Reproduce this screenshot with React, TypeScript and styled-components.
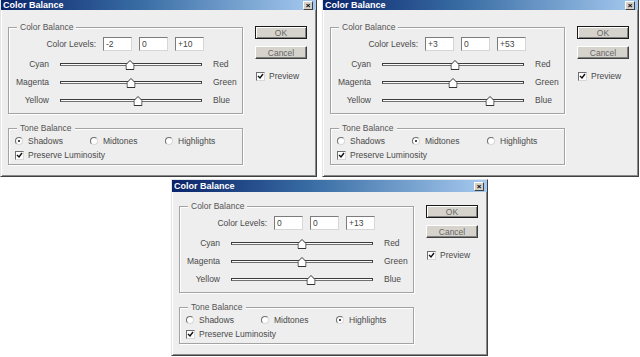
import styled, { createGlobalStyle } from "styled-components";

const GlobalStyle = createGlobalStyle`
  html, body {
    margin: 0;
    padding: 0;
    background: #ffffff;
  }
  body {
    font-family: "Liberation Sans", Arial, sans-serif;
    font-size: 8.5px;
    color: #4a4a4a;
  }
`;

type Tone = "Shadows" | "Midtones" | "Highlights";

type DialogData = {
  levels: [number, number, number];
  tone: Tone;
  cut: boolean;
};

const sliders = [
  { left: "Cyan", right: "Red" },
  { left: "Magenta", right: "Green" },
  { left: "Yellow", right: "Blue" },
];

const tones: Tone[] = ["Shadows", "Midtones", "Highlights"];

const fmt = (v: number) => (v > 0 ? `+${v}` : `${v}`);

const Page = styled.div`
  width: 640px;
  height: 357px;
  overflow: hidden;
  display: flex;
  flex-direction: column;
  gap: 2px;
`;

const TopRow = styled.div`
  display: flex;
  gap: 5px;
`;

const BottomRow = styled.div`
  display: flex;
  padding-left: 171px;
`;

const Window = styled.div<{ $cut: boolean }>`
  flex: none;
  width: 317px;
  height: 177px;
  box-sizing: border-box;
  background: #eeeeee;
  border: 1px solid #404040;
  border-top-color: #e4e4e4;
  border-left-color: #e4e4e4;
  ${({ $cut }) => ($cut ? "border-top: none;" : "")}
  box-shadow: inset 1px 1px 0 #ffffff, inset -1px -1px 0 #8a8a8a;
  display: flex;
  flex-direction: column;
`;

const TitleBar = styled.div<{ $cut: boolean }>`
  flex: none;
  height: ${({ $cut }) => ($cut ? 10 : 12)}px;
  margin-bottom: ${({ $cut }) => ($cut ? 3 : 0)}px;
  padding: 0 3px 0 2px;
  display: flex;
  align-items: center;
  justify-content: space-between;
  background: linear-gradient(to right, #0a246a 0%, #3a6ea5 45%, #a6caf0 100%);
  color: #ffffff;
  font-size: 9px;
  font-weight: bold;
`;

const CloseButton = styled.div`
  width: 10px;
  height: 9px;
  box-sizing: border-box;
  background: #d4d0c8;
  border: 1px solid #404040;
  border-top-color: #ffffff;
  border-left-color: #ffffff;
  color: #000000;
  font-size: 8px;
  line-height: 7px;
  text-align: center;
  font-weight: bold;
`;

const Body = styled.div`
  flex: 1;
  display: flex;
  gap: 12px;
  padding-left: 7px;
`;

const LeftColumn = styled.div`
  width: 235px;
  display: flex;
  flex-direction: column;
`;

const Group = styled.div<{ $top: number; $pad: string }>`
  position: relative;
  margin-top: ${({ $top }) => $top}px;
  padding: ${({ $pad }) => $pad};
  border: 1px solid #a3a3a3;
  box-shadow: inset 1px 1px 0 #ffffff, 1px 1px 0 #ffffff;
  display: flex;
  flex-direction: column;
`;

const Legend = styled.span`
  position: absolute;
  top: -6px;
  left: 8px;
  padding: 0 3px;
  line-height: 10px;
  background: #eeeeee;
  color: #555555;
`;

const LevelsRow = styled.div`
  height: 14px;
  display: flex;
  align-items: center;
  gap: 7px;
  margin-bottom: 4px;
`;

const LevelsLabel = styled.span`
  width: 87px;
  text-align: right;
`;

const Field = styled.div`
  width: 29px;
  height: 14px;
  box-sizing: border-box;
  padding-left: 2px;
  background: #ffffff;
  border: 1px solid #7c7c7c;
  border-right-color: #d6d6d6;
  border-bottom-color: #d6d6d6;
  line-height: 12px;
  color: #444444;
`;

const SliderRow = styled.div`
  height: 18px;
  display: grid;
  grid-template-columns: 40px 142px auto;
  column-gap: 11px;
  align-items: center;
`;

const SideLabel = styled.span<{ $right?: boolean }>`
  text-align: ${({ $right }) => ($right ? "left" : "right")};
`;

const Track = styled.div`
  position: relative;
  height: 3px;
  box-sizing: border-box;
  border: 1px solid #3c3c3c;
  border-bottom-color: #707070;
  background: #fafafa;
`;

const Thumb = styled.svg`
  position: absolute;
  top: -4px;
  width: 9px;
  height: 10px;
  transform: translateX(-50%);
`;

const RadioRow = styled.div`
  height: 12px;
  padding-left: 6px;
  display: grid;
  grid-template-columns: repeat(3, 75px);
  align-items: center;
  margin-bottom: 2px;
`;

const Option = styled.div`
  display: flex;
  align-items: center;
  gap: 5px;
`;

const RadioDot = styled.span<{ $on: boolean }>`
  width: 8px;
  height: 8px;
  box-sizing: border-box;
  border-radius: 50%;
  border: 1px solid #6e6e6e;
  border-right-color: #d8d8d8;
  border-bottom-color: #d8d8d8;
  background: #ffffff;
  display: flex;
  align-items: center;
  justify-content: center;
  &::after {
    content: "";
    width: 2px;
    height: 2px;
    border-radius: 50%;
    background: ${({ $on }) => ($on ? "#111111" : "transparent")};
  }
`;

const CheckRow = styled.div<{ $indent: number }>`
  height: 12px;
  padding-left: ${({ $indent }) => $indent}px;
  display: flex;
  align-items: center;
  gap: 4px;
`;

const Box = styled.span`
  width: 9px;
  height: 9px;
  box-sizing: border-box;
  border: 1px solid #6e6e6e;
  border-right-color: #d8d8d8;
  border-bottom-color: #d8d8d8;
  background: #ffffff;
  display: flex;
  align-items: center;
  justify-content: center;
`;

const RightColumn = styled.div`
  width: 52px;
  padding-top: 13px;
  display: flex;
  flex-direction: column;
  gap: 7px;
`;

const Button = styled.div<{ $default?: boolean }>`
  height: 13px;
  box-sizing: border-box;
  background: #d6d3cd;
  border: 1px solid #404040;
  ${({ $default }) =>
    $default
      ? "border-color: #1a1a1a; box-shadow: inset 1px 1px 0 #ffffff, inset -1px -1px 0 #808080;"
      : "border-top-color: #ffffff; border-left-color: #ffffff; box-shadow: inset -1px -1px 0 #808080;"}
  display: flex;
  align-items: center;
  justify-content: center;
  color: #666666;
`;

const PreviewWrap = styled.div`
  margin-top: 4px;
`;

const CheckMark = () => (
  <svg width="7" height="7" viewBox="0 0 7 7">
    <polyline points="1,3 3,5 6,1" fill="none" stroke="#111" strokeWidth="1.4" />
  </svg>
);

const Checkbox = ({ label, indent }: { label: string; indent: number }) => (
  <CheckRow $indent={indent}>
    <Box>
      <CheckMark />
    </Box>
    <span>{label}</span>
  </CheckRow>
);

const Slider = ({ left, right, value }: { left: string; right: string; value: number }) => (
  <SliderRow>
    <SideLabel>{left}</SideLabel>
    <Track>
      <Thumb viewBox="0 0 9 10" style={{ left: `${50 + value / 2}%` }}>
        <path d="M0.5 4.5 L4.5 0.5 L8.5 4.5 V9.5 H0.5 Z" fill="#ffffff" stroke="#333333" />
      </Thumb>
    </Track>
    <SideLabel $right>{right}</SideLabel>
  </SliderRow>
);

const ColorBalanceDialog = ({ levels, tone, cut }: DialogData) => (
  <Window $cut={cut}>
    <TitleBar $cut={cut}>
      <span>Color Balance</span>
      <CloseButton>×</CloseButton>
    </TitleBar>
    <Body>
      <LeftColumn>
        <Group $top={14} $pad="9px 0 4px">
          <Legend>Color Balance</Legend>
          <LevelsRow>
            <LevelsLabel>Color Levels:</LevelsLabel>
            {levels.map((v, i) => (
              <Field key={i}>{fmt(v)}</Field>
            ))}
          </LevelsRow>
          {sliders.map((s, i) => (
            <Slider key={s.left} left={s.left} right={s.right} value={levels[i]} />
          ))}
        </Group>
        <Group $top={14} $pad="6px 0 3px">
          <Legend>Tone Balance</Legend>
          <RadioRow>
            {tones.map((t) => (
              <Option key={t}>
                <RadioDot $on={t === tone} />
                <span>{t}</span>
              </Option>
            ))}
          </RadioRow>
          <Checkbox label="Preserve Luminosity" indent={6} />
        </Group>
      </LeftColumn>
      <RightColumn>
        <Button $default>OK</Button>
        <Button>Cancel</Button>
        <PreviewWrap>
          <Checkbox label="Preview" indent={1} />
        </PreviewWrap>
      </RightColumn>
    </Body>
  </Window>
);

const App = () => (
  <>
    <GlobalStyle />
    <Page>
      <TopRow>
        <ColorBalanceDialog levels={[-2, 0, 10]} tone="Shadows" cut />
        <ColorBalanceDialog levels={[3, 0, 53]} tone="Midtones" cut />
      </TopRow>
      <BottomRow>
        <ColorBalanceDialog levels={[0, 0, 13]} tone="Highlights" cut={false} />
      </BottomRow>
    </Page>
  </>
);

export default App;
